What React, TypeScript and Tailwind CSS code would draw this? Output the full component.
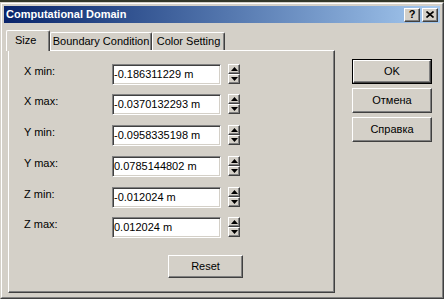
import React from "react";

const rows = [
  { label: "X min:", value: "-0.186311229 m", gap: "" },
  { label: "X max:", value: "-0.0370132293 m", gap: "mt-[9px]" },
  { label: "Y min:", value: "-0.0958335198 m", gap: "mt-[10px]" },
  { label: "Y max:", value: "0.0785144802 m", gap: "mt-[10px]" },
  { label: "Z min:", value: "-0.012024 m", gap: "mt-[10px]" },
  { label: "Z max:", value: "0.012024 m", gap: "mt-[9px]" },
];

function Arrow({ up }: { up?: boolean }) {
  return (
    <svg width="7" height="4" viewBox="0 0 7 4">
      {up ? <path d="M0 4 L3.5 0 L7 4 Z" fill="#000" /> : <path d="M0 0 L3.5 4 L7 0 Z" fill="#000" />}
    </svg>
  );
}

function Spinner() {
  return (
    <div className="flex flex-col w-[12px]">
      <div className="h-[10px] flex items-center justify-center bg-[#d4d0c8] border border-t-white border-l-white border-r-[#404040] border-b-[#404040] shadow-[inset_-1px_-1px_0_#808080]">
        <Arrow up />
      </div>
      <div className="h-[10px] flex items-center justify-center bg-[#d4d0c8] border border-t-white border-l-white border-r-[#404040] border-b-[#404040] shadow-[inset_-1px_-1px_0_#808080]">
        <Arrow />
      </div>
    </div>
  );
}

function Btn({ children, primary, className = "" }: { children: React.ReactNode; primary?: boolean; className?: string }) {
  const inner = (
    <div className="h-full w-full flex items-center justify-center border border-t-white border-l-white border-r-[#404040] border-b-[#404040] shadow-[inset_-1px_-1px_0_#808080] text-black text-[11px]">
      {children}
    </div>
  );
  return primary ? (
    <div className={`border border-black ${className}`}>{inner}</div>
  ) : (
    <div className={className}>{inner}</div>
  );
}

export default function App() {
  return (
    <div className="w-[444px] h-[299px] bg-[#d4d0c8] overflow-hidden font-['Liberation_Sans',Arial,sans-serif] text-[11px] text-black">
      <div className="h-[2px] bg-[#34382a]" />
      <div className="h-[297px] border border-t-[#d4d0c8] border-l-[#d4d0c8] border-r-[#404040] border-b-[#404040]">
        <div className="h-full border border-t-white border-l-white border-r-[#808080] border-b-[#808080] p-[2px]">
          {/* title bar */}
          <div className="h-[17px] flex items-center justify-between bg-gradient-to-r from-[#0a246a] to-[#a6caf0] pl-[2px] pr-[2px]">
            <span className="text-white font-bold text-[11px] leading-none">Computational Domain</span>
            <div className="flex gap-[2px]">
              <div className="w-[16px] h-[14px] bg-[#d4d0c8] border border-t-white border-l-white border-r-[#404040] border-b-[#404040] shadow-[inset_-1px_-1px_0_#808080] flex items-center justify-center font-bold text-[11px] leading-none">
                ?
              </div>
              <div className="w-[16px] h-[14px] bg-[#d4d0c8] border border-t-white border-l-white border-r-[#404040] border-b-[#404040] shadow-[inset_-1px_-1px_0_#808080] flex items-center justify-center">
                <svg width="8" height="7" viewBox="0 0 8 7">
                  <path d="M0.5 0.5 L7.5 6.5 M7.5 0.5 L0.5 6.5" stroke="#000" strokeWidth="1.6" />
                </svg>
              </div>
            </div>
          </div>

          <div className="flex mt-[7px]">
            {/* left: tabs + pane */}
            <div className="ml-[4px] w-[327px] flex flex-col">
              <div className="h-[20px] flex items-end">
                <div className="relative z-10 -ml-[2px] w-[44px] h-[21px] -mb-[1px] bg-[#d4d0c8] border-t border-l border-r border-t-white border-l-white border-r-[#404040] shadow-[inset_-1px_0_0_#808080] rounded-t-[2px] flex items-center pl-[8px] pb-[1px]">
                  Size
                </div>
                <div className="w-[102px] h-[18px] bg-[#d4d0c8] border-t border-l border-r border-t-white border-l-white border-r-[#404040] shadow-[inset_-1px_0_0_#808080] rounded-t-[2px] flex items-center justify-center">
                  Boundary Condition
                </div>
                <div className="w-[73px] h-[18px] bg-[#d4d0c8] border-t border-l border-r border-t-white border-l-white border-r-[#404040] shadow-[inset_-1px_0_0_#808080] rounded-t-[2px] flex items-center justify-center">
                  Color Setting
                </div>
              </div>
              <div className="h-[243px] border border-t-white border-l-white border-r-[#404040] border-b-[#404040] shadow-[inset_-1px_-1px_0_#808080] pt-[13px] pl-[15px]">
                {rows.map((r) => (
                  <div key={r.label} className={`flex items-start ${r.gap}`}>
                    <div className="w-[88px] pt-[1px] leading-[13px]">{r.label}</div>
                    <div className="w-[109px] h-[21px] bg-white border border-t-[#808080] border-l-[#808080] border-r-white border-b-white shadow-[inset_1px_1px_0_#404040,inset_-1px_-1px_0_#d4d0c8] flex items-center pl-[1px] leading-none">
                      {r.value}
                    </div>
                    <div className="ml-[7px]">
                      <Spinner />
                    </div>
                  </div>
                ))}
                <Btn className="ml-[144px] mt-[17px] w-[75px] h-[23px]">Reset</Btn>
              </div>
            </div>

            {/* right: buttons */}
            <div className="ml-[17px] pt-[29px] flex flex-col gap-[4px]">
              <Btn primary className="w-[80px] h-[25px]">OK</Btn>
              <Btn className="w-[80px] h-[25px]">Отмена</Btn>
              <Btn className="w-[80px] h-[25px]">Справка</Btn>
            </div>
          </div>
        </div>
      </div>
    </div>
  );
}
